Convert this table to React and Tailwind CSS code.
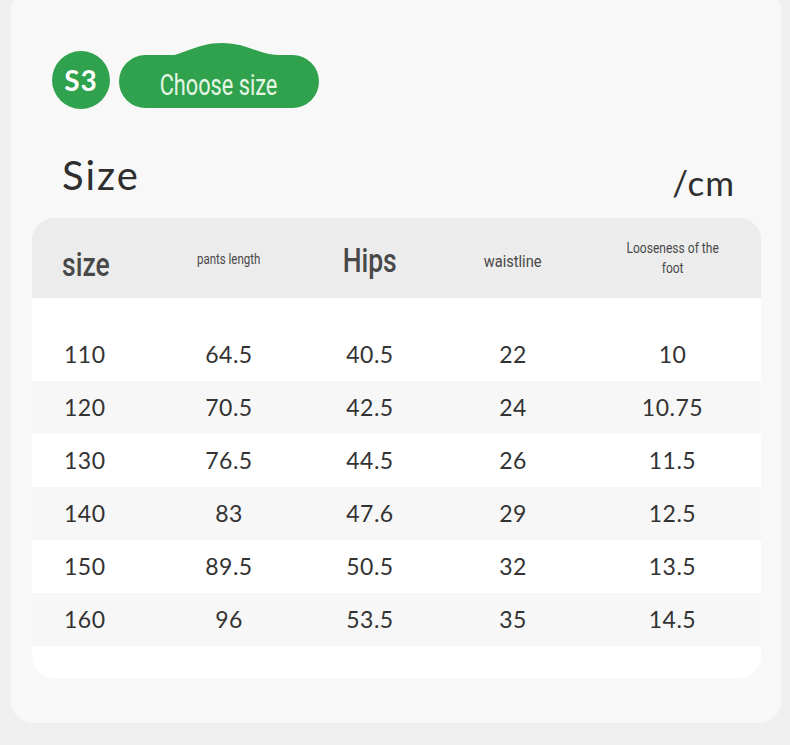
import React from 'react'

const rows = [
  ['110', '64.5', '40.5', '22', '10'],
  ['120', '70.5', '42.5', '24', '10.75'],
  ['130', '76.5', '44.5', '26', '11.5'],
  ['140', '83', '47.6', '29', '12.5'],
  ['150', '89.5', '50.5', '32', '13.5'],
  ['160', '96', '53.5', '35', '14.5'],
]

const condensed = { fontFamily: 'Roboto, "Noto Sans", sans-serif' }
const geo = { fontFamily: 'Lato, "Noto Sans", sans-serif' }

const cols = 'grid grid-cols-[128px_138px_144px_142px_177px]'

export default function App() {
  return (
    <div className="w-[790px] h-[745px] bg-[#efefef] pl-[11px] pr-[9px] pb-[22px]">
      <div className="h-full bg-[#f8f8f8] rounded-b-[22px] rounded-t-[6px] pl-[21px] pr-[20px] pt-[51px]">
        {/* step badge */}
        <div className="flex items-end gap-[9px] pl-[20px]">
          <div className="w-[58px] h-[58px] rounded-full bg-[#30a24e] flex items-center justify-center text-white text-[28px] font-bold tracking-[1px]" style={geo}>
            S3
          </div>
          <div className="relative w-[200px] h-[53px] mb-[1px]">
            <svg className="absolute left-0 top-[-12px]" width="200" height="30" viewBox="0 0 200 30">
              <path d="M42 14 C62 14 76 0 103 0 C128 0 140 12 160 12 L160 30 L42 30 Z" fill="#30a24e" />
            </svg>
            <div className="absolute inset-0 rounded-full bg-[#30a24e] flex items-center justify-center pt-[8px] text-[#e6f6e4]" style={condensed}>
              <span className="inline-block text-[29px] scale-x-[0.75]">Choose size</span>
            </div>
          </div>
        </div>

        <div className="flex items-end justify-between mt-[46px] pl-[30px] pr-[26px] text-[#2e2e2e]" style={geo}>
          <span className="text-[40px] leading-none tracking-[2px]">Size</span>
          <span className="text-[35px] leading-none mb-[-5px] tracking-[1px]">/cm</span>
        </div>

        {/* table */}
        <div className="mt-[23px] rounded-[22px] overflow-hidden">
          <div className={`${cols} h-[80px] bg-[#ececec] items-center text-[#484848] pt-[8px]`} style={condensed}>
            <div className="pl-[30px] pt-[4px]">
              <span className="inline-block origin-left text-[34px] font-medium scale-x-[0.78]">size</span>
            </div>
            <div className="text-center pb-[6px]">
              <span className="inline-block text-[14px] scale-x-[0.82]">pants length</span>
            </div>
            <div className="text-center pb-[4px]">
              <span className="inline-block text-[34px] font-medium scale-x-[0.78]">Hips</span>
            </div>
            <div className="text-center">
              <span className="inline-block text-[17px] scale-x-[0.86]">waistline</span>
            </div>
            <div className="text-center pb-[6px]">
              <span className="inline-block text-[14px] leading-[20px] scale-x-[0.86]">Looseness of the<br />foot</span>
            </div>
          </div>
          <div className="bg-white pt-[30px] pb-[32px] text-[#333]" style={geo}>
            {rows.map((r, i) => (
              <div key={r[0]} className={`${cols} items-center h-[53px] text-[23px] tracking-[0.5px] ${i % 2 === 1 ? 'bg-[#f7f7f7]' : 'bg-white'}`}>
                <div className="pl-[32px]">{r[0]}</div>
                <div className="text-center">{r[1]}</div>
                <div className="text-center">{r[2]}</div>
                <div className="text-center">{r[3]}</div>
                <div className="text-center">{r[4]}</div>
              </div>
            ))}
          </div>
        </div>
      </div>
    </div>
  )
}
